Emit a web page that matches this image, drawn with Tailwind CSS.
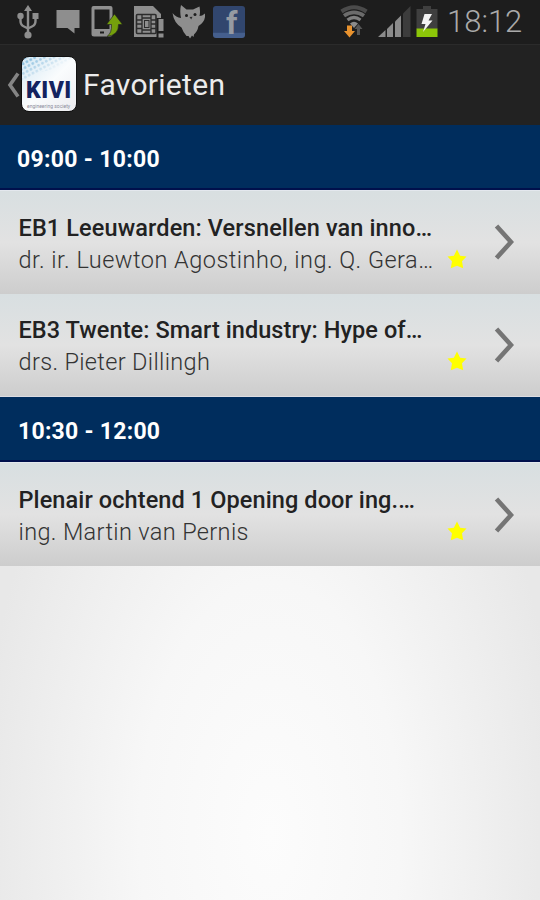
<!DOCTYPE html>
<html lang="nl">
<head>
  <meta charset="UTF-8" />
  <meta name="viewport" content="width=device-width, initial-scale=1" />
  <title>Favorieten</title>
  <script src="https://cdn.jsdelivr.net/npm/@tailwindcss/browser@4"></script>
  <style>
    body {
      font-family: Roboto, 'Liberation Sans', sans-serif;
    }
  </style>
</head>
<body class="w-[540px] h-[900px] overflow-hidden flex flex-col bg-[#f0f0f0]">
  <!-- status bar -->
  <div class="h-11 shrink-0 bg-[#1d1d1d] flex items-center justify-between pl-4 pr-[17px]">
    <div class="flex items-center gap-[9px]">
      <!-- usb -->
      <svg class="w-6 h-11" viewBox="0 0 24 44" fill="none" stroke="#8e8e8e" stroke-width="2.4">
        <path d="M12 10V34M4.500 17V21Q4.500 25 8 26.500L12 28.500M19.500 17V21Q19.500 25 16 26.500L12 28.500" />
        <path d="M12 5l4 6H8z" fill="#8e8e8e" stroke="none" />
        <rect x="16.500" y="13" width="6" height="6" fill="#8e8e8e" stroke="none" />
        <circle cx="4.500" cy="16" r="3.200" fill="#8e8e8e" stroke="none" />
        <circle cx="12" cy="35" r="3.600" fill="#8e8e8e" stroke="none" />
      </svg>
      <!-- message -->
      <svg class="w-8 h-11" viewBox="0 0 32 44" fill="#8e8e8e">
        <path d="M7.500 10h23v18H25.500v5.500L18.500 28H7.500z" />
      </svg>
      <!-- phone sync -->
      <svg class="w-[34px] h-11" viewBox="0 0 34 44">
        <path fill="#909090" fill-rule="evenodd" d="M3.500 6H20.500Q22.500 6 22.500 8V34Q22.500 36.500 20 36.500H4Q1.500 36.500 1.500 34V8Q1.500 6 3.500 6zM4.500 9.500V29H19.500V9.500z" />
        <path d="M10 32.500h4" stroke="#1d1d1d" stroke-width="2" />
        <path d="M17 36.500Q22 33 21.500 24.500H16.500L24.500 14L32.500 24.500H28.500Q29 35 17 36.500z" fill="#75a00c" stroke="#1d1d1d" stroke-width=".6" />
      </svg>
      <!-- sim card -->
      <svg class="w-8 h-11" viewBox="0 0 32 44" fill="none" stroke="#8e8e8e">
        <path d="M1 6H20L28 14V37H1z" fill="#8e8e8e" stroke="none" />
        <rect x="3.500" y="14.500" width="19.500" height="19" rx="1" stroke="#2c2c2c" stroke-width="1.600" />
        <path d="M9 14V34M18 14V34M3.500 20H9M3.500 24H9M3.500 28.500H9M18 20H23M18 24H23M18 28.500H23M9 18H18M9 30H18" stroke="#2c2c2c" stroke-width="1.300" />
        <rect x="11.500" y="20.500" width="4.500" height="7" stroke="#2c2c2c" />
        <rect x="23.500" y="18" width="8" height="20" fill="#1d1d1d" stroke="none" />
        <path d="M25.500 19H30.500V31H25.500zM25.500 33.500H30.500V37.500H25.500z" fill="#8e8e8e" stroke="none" />
      </svg>
      <!-- owl -->
      <svg class="w-[34px] h-11 -ml-[3px]" viewBox="0 0 34 44" fill="#8e8e8e">
        <path d="M10 5L15.500 9.500H22L28.500 6.500Q29.500 12 28.500 16Q31 16 34 13.500Q35 21 27.500 26Q26.500 31.500 23 34.500L22.500 37L21 35.500L19 38.500L17.500 36L15.500 36Q12 32 10.500 27.500Q3 23 1.500 13Q5 17.500 10 18Q8.500 11 10 5z" />
        <circle cx="15.500" cy="15.500" r="1.500" fill="#1d1d1d" />
        <circle cx="24" cy="14.500" r="1.500" fill="#1d1d1d" />
        <path d="M18.500 17L21.500 16.700L20.200 19.500z" fill="#2c2c2c" />
      </svg>
      <!-- facebook -->
      <div class="flex w-8 h-8 -ml-[1px] pl-[13px] rounded-[3px] bg-linear-to-b from-[#31466e] from-82% to-[#455f8d] to-86%">
        <span class="text-[32px] leading-[34px] font-bold text-[#969aa2]">f</span>
      </div>
    </div>
    <div class="flex items-center">
      <!-- wifi -->
      <svg class="w-[30px] h-11" viewBox="0 0 30 44" fill="none">
        <path d="M1.500 11.500Q14 3 26.500 11.500" stroke="#4b4b4b" stroke-width="4" />
        <path d="M4 15.800Q14 9 24 15.800" stroke="#6c6c6c" stroke-width="3.800" />
        <path d="M7.500 20Q14 15 20.500 20" stroke="#808080" stroke-width="3.200" />
        <path d="M10 23.500Q14 20 18 23.500L14 28z" fill="#8b8b8b" />
        <path d="M7 25.500H12V31H15L9.500 37.500L4 31H7z" fill="#e8922e" />
        <path d="M17 35V29H14.500L18.500 24L22.500 29H20V35z" fill="#555" />
      </svg>
      <!-- signal -->
      <svg class="w-[34px] h-11 ml-2" viewBox="0 0 34 44">
        <path d="M0 37L7.500 30V37z" fill="#8b8b8b" />
        <path d="M9 29L15 23V37H9z" fill="#8b8b8b" />
        <path d="M17 21.500L23 15.500V37H17z" fill="#8b8b8b" />
        <path d="M25 13.500L32.500 6V37H25z" fill="#3c3c3c" />
      </svg>
      <!-- battery -->
      <svg class="w-[22px] h-11 ml-1" viewBox="0 0 22 44">
        <path d="M7 6H15V9H21.500V29H.5V9H7z" fill="#3f3f3f" />
        <path d="M.5 28.500H21.500V37H.5z" fill="#8cc608" />
        <path d="M8.500 14H16L12.500 20.500H16.500L7 32L9.500 24H5.500z" fill="#f4f4f4" />
      </svg>
      <span class="ml-[9px] w-[76px] whitespace-nowrap text-[31px] leading-[44px] font-light text-[#aaa]">18:12</span>
    </div>
  </div>

  <!-- action bar -->
  <div class="h-[81px] shrink-0 flex items-center bg-[#222] border-t border-[#2b2b2b] pl-[7px]">
    <svg class="w-[13px] h-[26px] shrink-0" viewBox="0 0 13 26" fill="none" stroke="#858585" stroke-width="3.600">
      <path d="M11 1.500L3 13L11 24.500" />
    </svg>
    <div class="relative ml-[1px] -mt-[2px] w-[56px] h-[56px] rounded-[8px] bg-linear-to-br from-[#d4e8f4] via-[#fafcfd] to-[#ececf0] border border-[#111] overflow-hidden">
      <svg class="absolute inset-0 w-full h-full" viewBox="0 0 56 56">
        <defs>
          <pattern id="dots" width="4.500" height="4.500" patternUnits="userSpaceOnUse" patternTransform="rotate(-28)">
            <circle cx="2.200" cy="2.200" r="1.500" fill="#79b5d9" />
          </pattern>
          <linearGradient id="fade" x1="0" y1="0" x2=".75" y2=".6">
            <stop offset="0" stop-color="#fff" />
            <stop offset=".85" stop-color="#fff" stop-opacity="0" />
          </linearGradient>
          <mask id="dotmask"><path d="M0 0H54L36 12L18 16L0 25z" fill="url(#fade)" /></mask>
        </defs>
        <rect width="56" height="56" fill="url(#dots)" mask="url(#dotmask)" />
      </svg>
      <div class="relative flex flex-col items-start pl-1 pt-[22px]">
        <span class="text-[23px] leading-[23px] tracking-[.5px] font-black text-[#14235f]">KIVI</span>
        <span class="pt-px pl-px text-[5px] leading-[6px] whitespace-nowrap text-[#8d8d9c]">engineering society</span>
      </div>
    </div>
    <h1 class="ml-[6px] text-[30px] leading-[36px] tracking-[.3px] text-[#ececec]">Favorieten</h1>
  </div>

  <!-- favourites -->
  <div class="shrink-0">
    <div class="h-[65px] flex items-center pl-[17px] pt-[8px] bg-[#002d5d] border-b-2 border-[#00104c] text-[23px] tracking-[.3px] font-bold text-white">09:00 - 10:00</div>
    <div class="h-[104px] flex items-center bg-linear-to-b from-[#d8dfe1] via-[#e2e2e2] to-[#cdcdcd] border-t border-[#e4e8ee]">
      <div class="w-[430px] pl-[18.5px] pt-[2px] whitespace-nowrap">
        <p class="text-[23.5px] leading-[32px] tracking-[.12px] font-medium text-[#222]">EB1 Leeuwarden: Versnellen van inno…</p>
        <p class="text-[23.5px] leading-[32px] tracking-[.48px] font-light text-[#333]">dr. ir. Luewton Agostinho, ing. Q. Gera…</p>
      </div>
      <svg class="w-5 h-5 ml-[17px] mt-8" viewBox="0 0 20 20" fill="#ffff00"><path d="M10 0.500L13.100 6.700L19.500 7.500L15 12.300L16.200 19.200L10 16.800L3.800 19.200L5 12.300L.5 7.500L6.900 6.700z" /></svg>
      <svg class="w-5 h-[36px] ml-[27px] -mt-px" viewBox="0 0 20 36" fill="none" stroke="#757575" stroke-width="4.600"><path d="M2.500 2L17 18L2.500 34" /></svg>
    </div>
    <div class="h-[103px] flex items-center bg-linear-to-b from-[#d8dfe1] via-[#e2e2e2] to-[#cdcdcd] border-b border-[#dcdce2]">
      <div class="w-[430px] pl-[18.5px] pt-[2px] whitespace-nowrap">
        <p class="text-[23.5px] leading-[32px] tracking-[.07px] font-medium text-[#222]">EB3 Twente: Smart industry: Hype of…</p>
        <p class="text-[23.5px] leading-[32px] tracking-[.34px] font-light text-[#333]">drs. Pieter Dillingh</p>
      </div>
      <svg class="w-5 h-5 ml-[17px] mt-8" viewBox="0 0 20 20" fill="#ffff00"><path d="M10 0.500L13.100 6.700L19.500 7.500L15 12.300L16.200 19.200L10 16.800L3.800 19.200L5 12.300L.5 7.500L6.900 6.700z" /></svg>
      <svg class="w-5 h-[36px] ml-[27px] -mt-px" viewBox="0 0 20 36" fill="none" stroke="#757575" stroke-width="4.600"><path d="M2.500 2L17 18L2.500 34" /></svg>
    </div>
    <div class="h-[65px] flex items-center pl-[18px] pt-[8px] bg-[#002d5d] border-b-2 border-[#00104c] text-[23px] tracking-[.25px] font-bold text-white">10:30 - 12:00</div>
    <div class="h-[104px] flex items-center bg-linear-to-b from-[#d8dfe1] via-[#e2e2e2] to-[#cdcdcd] border-t border-[#e4e8ee]">
      <div class="w-[430px] pl-[18.5px] pt-[2px] whitespace-nowrap">
        <p class="text-[23.5px] leading-[32px] tracking-[.1px] font-medium text-[#222]">Plenair ochtend 1 Opening door ing.…</p>
        <p class="text-[23.5px] leading-[32px] tracking-[.36px] font-light text-[#333]">ing. Martin van Pernis</p>
      </div>
      <svg class="w-5 h-5 ml-[17px] mt-8" viewBox="0 0 20 20" fill="#ffff00"><path d="M10 0.500L13.100 6.700L19.500 7.500L15 12.300L16.200 19.200L10 16.800L3.800 19.200L5 12.300L.5 7.500L6.900 6.700z" /></svg>
      <svg class="w-5 h-[36px] ml-[27px]" viewBox="0 0 20 36" fill="none" stroke="#757575" stroke-width="4.600"><path d="M2.500 2L17 18L2.500 34" /></svg>
    </div>
  </div>

  <div class="grow bg-[radial-gradient(ellipse_290px_560px_at_50%_80%,#fcfcfc_0%,#f7f7f7_45%,#e8e8e8_100%)]"></div>
</body>
</html>
